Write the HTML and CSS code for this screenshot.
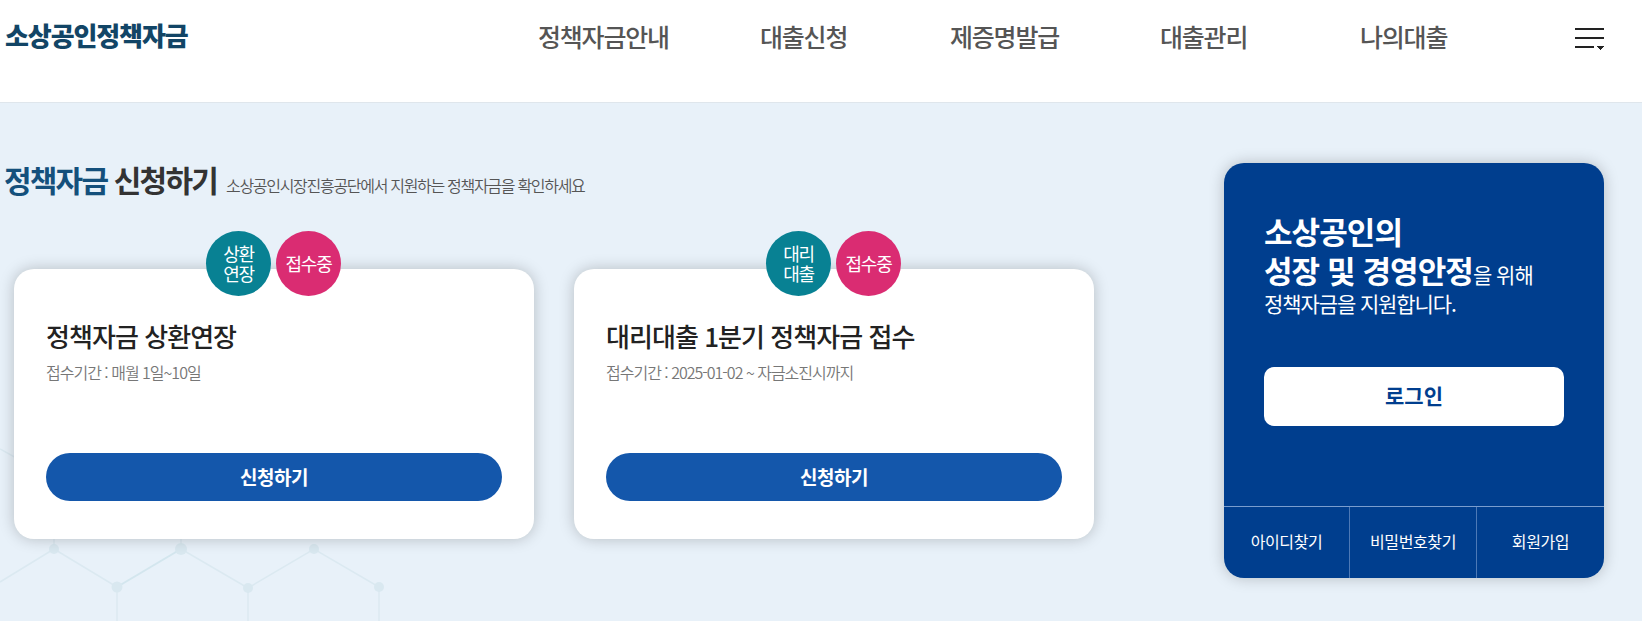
FILE: index.html
```html
<!DOCTYPE html>
<html lang="ko">
<head>
  <meta charset="UTF-8">
  <meta name="viewport" content="width=device-width, initial-scale=1.0">
  <title>소상공인정책자금</title>
  <link rel="stylesheet" href="styles.css">
</head>
<body>
  <header class="header">
    <h1 class="logo">소상공인정책자금</h1>
    <nav class="gnb">
      <a class="gnb-policy">정책자금안내</a>
      <a class="gnb-apply">대출신청</a>
      <a class="gnb-cert">제증명발급</a>
      <a class="gnb-manage">대출관리</a>
      <a class="gnb-my">나의대출</a>
    </nav>
    <button class="menu-btn" type="button" aria-label="전체메뉴">
      <svg width="29" height="22" viewBox="0 0 29 22">
        <path d="M0 0h29v2H0zM0 9h29v2H0zM0 18h19v2H0zM22 18h7v1h-1v1h-1v1h-1v1h-1v-1h-1v-1h-1v-1h-1z" fill="#222"/>
      </svg>
    </button>
  </header>

  <main class="main">
    <svg class="pattern" width="400" height="200" viewBox="0 0 400 200">
      <g fill="none" stroke="#dbe9f1" stroke-width="1.5">
        <path d="M0 28L54 58V128L0 161M54 128L117 166V200M181 110V128L248 167V200M248 167L314 128L379 166V200"/>
        <path d="M117 166L181 128" stroke="#d3e6ee" stroke-width="2"/>
      </g>
      <g fill="#d9e8f0">
        <circle cx="54" cy="128" r="5"/>
        <circle cx="181" cy="128" r="6"/>
        <circle cx="314" cy="128" r="5"/>
        <circle cx="117" cy="166" r="5.5"/>
        <circle cx="248" cy="167" r="5"/>
        <circle cx="379" cy="166" r="5"/>
      </g>
    </svg>

    <section class="apply">
      <div class="apply-head">
        <h2><em>정책자금</em> 신청하기</h2>
        <p>소상공인시장진흥공단에서 지원하는 정책자금을 확인하세요</p>
      </div>
      <div class="card-list">
        <article class="card">
          <div class="badges">
            <span class="badge">상환<br>연장</span>
            <span class="badge badge-on">접수중</span>
          </div>
          <h3>정책자금 상환연장</h3>
          <p>접수기간 : 매월 1일~10일</p>
          <button class="apply-btn" type="button">신청하기</button>
        </article>
        <article class="card">
          <div class="badges">
            <span class="badge">대리<br>대출</span>
            <span class="badge badge-on">접수중</span>
          </div>
          <h3>대리대출 1분기 정책자금 접수</h3>
          <p>접수기간 : 2025-01-02 ~ 자금소진시까지</p>
          <button class="apply-btn" type="button">신청하기</button>
        </article>
      </div>
    </section>

    <aside class="login">
      <div class="login-top">
        <p class="login-text"><strong>소상공인의</strong></p>
        <p class="login-text"><strong>성장 및 경영안정</strong>을 위해</p>
        <p class="login-sub">정책자금을 지원합니다.</p>
        <button class="login-btn" type="button">로그인</button>
      </div>
      <div class="login-links">
        <a>아이디찾기</a>
        <a>비밀번호찾기</a>
        <a>회원가입</a>
      </div>
    </aside>
  </main>
</body>
</html>
```
FILE: styles.css
```css
* {
  box-sizing: border-box;
  margin: 0;
  padding: 0;
}

body {
  width: 1642px;
  height: 621px;
  overflow: hidden;
  font-family: "Noto Sans CJK KR", sans-serif;
  color: #222;
  background: #fff;
}

button {
  border: 0;
  font-family: inherit;
  cursor: pointer;
}

em {
  font-style: normal;
}

/* 헤더 */
.header {
  display: flex;
  height: 103px;
  padding: 0 38px 0 5px;
  border-bottom: 1px solid #dfe6ec;
}

.logo {
  width: 533px;
  padding-top: 18px;
  font-size: 26px;
  font-weight: 900;
  line-height: 34px;
  letter-spacing: -1.1px;
  color: #124566;
}

.gnb {
  display: flex;
  flex: 1;
  padding-top: 18px;
  font-size: 25px;
  font-weight: 500;
  line-height: 36px;
  letter-spacing: -1.2px;
  color: #555;
  white-space: nowrap;
}

.gnb-policy {
  width: 222px;
}

.gnb-apply {
  width: 190px;
}

.gnb-cert {
  width: 210px;
}

.gnb-manage {
  width: 200px;
}

.menu-btn {
  align-self: flex-start;
  height: 22px;
  margin-top: 28px;
  background: none;
}

.menu-btn svg {
  display: block;
}

/* 본문 */
.main {
  position: relative;
  display: flex;
  justify-content: space-between;
  height: 518px;
  padding: 60px 38px 0 5px;
  background: #e8f1f9;
}

.pattern {
  position: absolute;
  left: 0;
  bottom: 0;
}

.apply {
  position: relative;
}

.apply-head {
  display: flex;
  align-items: baseline;
  height: 106px;
  margin-left: -1px;
  white-space: nowrap;
}

.apply-head h2 {
  font-size: 30px;
  font-weight: 700;
  line-height: 32px;
  letter-spacing: -1.8px;
  color: #333;
}

.apply-head em {
  color: #14507c;
}

.apply-head p {
  margin-left: 9px;
  font-size: 16px;
  font-weight: 350;
  letter-spacing: -1.3px;
  color: #555;
}

.card-list {
  display: flex;
  gap: 40px;
  padding-left: 9px;
}

.card {
  position: relative;
  display: flex;
  flex-direction: column;
  width: 520px;
  height: 270px;
  padding: 49px 32px 38px;
  border-radius: 20px;
  background: #fff;
  box-shadow: 0 0 15px rgba(0, 0, 0, 0.22);
}

.badges {
  position: absolute;
  top: -38px;
  left: 192px;
  display: flex;
  gap: 5px;
}

.badge {
  display: flex;
  align-items: center;
  justify-content: center;
  width: 65px;
  height: 65px;
  padding-bottom: 2px;
  border-radius: 50%;
  font-size: 18px;
  line-height: 20px;
  letter-spacing: -1.3px;
  color: #fff;
  background: #088193;
}

.badge-on {
  background: #da2c72;
}

.card h3 {
  font-size: 26px;
  font-weight: 500;
  line-height: 36px;
  letter-spacing: -0.95px;
  color: #222;
}

.card p {
  margin-top: 6px;
  font-size: 16px;
  font-weight: 350;
  line-height: 24px;
  letter-spacing: -1px;
  color: #777;
}

.apply-btn {
  height: 48px;
  margin-top: auto;
  padding-bottom: 2px;
  border-radius: 24px;
  font-size: 19px;
  font-weight: 700;
  letter-spacing: -0.5px;
  color: #fff;
  background: #1457ab;
}

/* 로그인 */
.login {
  position: relative;
  display: flex;
  flex-direction: column;
  width: 380px;
  height: 415px;
  border-radius: 20px;
  color: #fff;
  background: #003e8e;
  box-shadow: 0 0 15px rgba(0, 0, 0, 0.22);
}

.login-top {
  flex: 1;
  padding: 48px 40px 0;
}

.login-text {
  height: 39px;
  font-size: 21px;
  line-height: 39px;
  letter-spacing: -1px;
  white-space: nowrap;
}

.login-text strong {
  font-size: 31px;
  font-weight: 700;
  letter-spacing: -0.9px;
}

.login-sub {
  font-size: 21px;
  line-height: 28px;
  letter-spacing: -1.1px;
}

.login-btn {
  width: 300px;
  height: 59px;
  margin-top: 50px;
  padding-bottom: 3px;
  border-radius: 10px;
  font-size: 21px;
  font-weight: 700;
  color: #003e8e;
  background: #fff;
}

.login-links {
  display: grid;
  grid-template-columns: 125px 127px 128px;
  height: 72px;
  border-top: 1px solid #7a9dce;
}

.login-links a {
  display: flex;
  align-items: center;
  justify-content: center;
  padding-bottom: 3px;
  font-size: 16px;
  letter-spacing: -0.4px;
}

.login-links a + a {
  border-left: 1px solid #4d79b6;
}
```
